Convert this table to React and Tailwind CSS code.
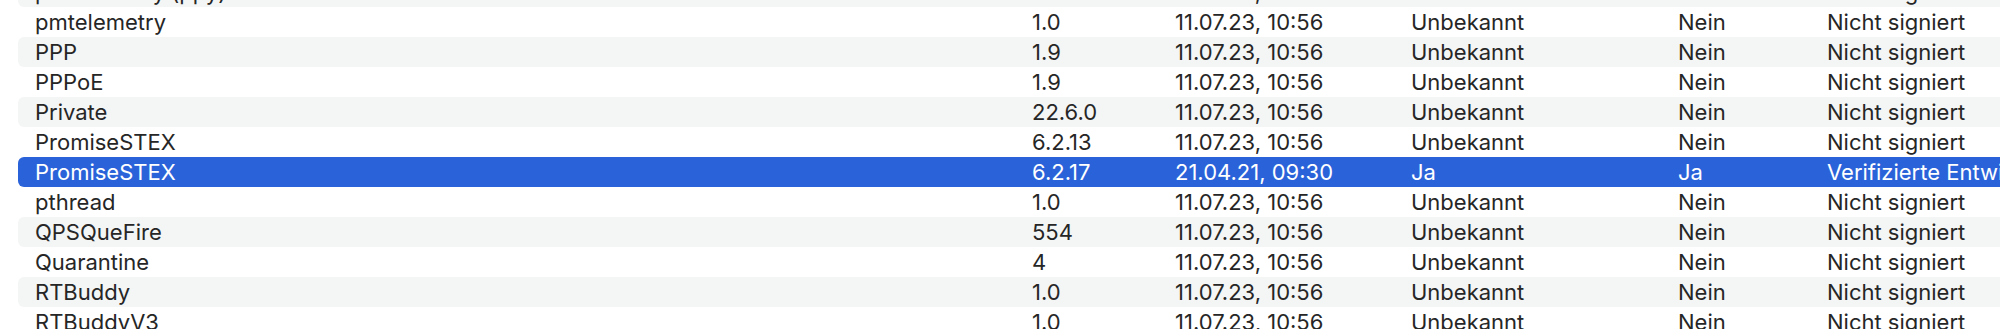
import React from 'react';

// Zeilen der Erweiterungsliste (Name, Version, Datum, Geladen, Apple, Signiert von)
const rows = [
  { name: 'pmsetlibrary (ppy)', version: '1.0', date: '11.07.23, 10:56', loaded: 'Unbekannt', apple: 'Nein', signed: 'Nicht signiert' },
  { name: 'pmtelemetry', version: '1.0', date: '11.07.23, 10:56', loaded: 'Unbekannt', apple: 'Nein', signed: 'Nicht signiert' },
  { name: 'PPP', version: '1.9', date: '11.07.23, 10:56', loaded: 'Unbekannt', apple: 'Nein', signed: 'Nicht signiert' },
  { name: 'PPPoE', version: '1.9', date: '11.07.23, 10:56', loaded: 'Unbekannt', apple: 'Nein', signed: 'Nicht signiert' },
  { name: 'Private', version: '22.6.0', date: '11.07.23, 10:56', loaded: 'Unbekannt', apple: 'Nein', signed: 'Nicht signiert' },
  { name: 'PromiseSTEX', version: '6.2.13', date: '11.07.23, 10:56', loaded: 'Unbekannt', apple: 'Nein', signed: 'Nicht signiert' },
  { name: 'PromiseSTEX', version: '6.2.17', date: '21.04.21, 09:30', loaded: 'Ja', apple: 'Ja', signed: 'Verifizierte Entwickler-ID', selected: true },
  { name: 'pthread', version: '1.0', date: '11.07.23, 10:56', loaded: 'Unbekannt', apple: 'Nein', signed: 'Nicht signiert' },
  { name: 'QPSQueFire', version: '554', date: '11.07.23, 10:56', loaded: 'Unbekannt', apple: 'Nein', signed: 'Nicht signiert' },
  { name: 'Quarantine', version: '4', date: '11.07.23, 10:56', loaded: 'Unbekannt', apple: 'Nein', signed: 'Nicht signiert' },
  { name: 'RTBuddy', version: '1.0', date: '11.07.23, 10:56', loaded: 'Unbekannt', apple: 'Nein', signed: 'Nicht signiert' },
  { name: 'RTBuddyV3', version: '1.0', date: '11.07.23, 10:56', loaded: 'Unbekannt', apple: 'Nein', signed: 'Nicht signiert' },
];

export default function App() {
  return (
    <div className="h-[329px] w-[2000px] overflow-hidden bg-white font-['Inter',sans-serif] text-[22px]">
      <div className="mt-[-23px] ml-[18px] w-[2100px]">
        {rows.map((row, i) => {
          const bg = row.selected ? 'bg-[#2a63d9] text-white' : i % 2 === 0 ? 'bg-[#f4f5f5] text-[#262626]' : 'bg-white text-[#262626]';
          return (
            <div key={i} className={`flex h-[30px] items-center rounded-[6px] whitespace-nowrap ${bg}`}>
              <div className="w-[1014px] pl-[17px]">{row.name}</div>
              <div className="w-[143px]">{row.version}</div>
              <div className="w-[236px]">{row.date}</div>
              <div className="w-[267px]">{row.loaded}</div>
              <div className="w-[149px]">{row.apple}</div>
              <div className="flex-1">{row.signed}</div>
            </div>
          );
        })}
      </div>
    </div>
  );
}
